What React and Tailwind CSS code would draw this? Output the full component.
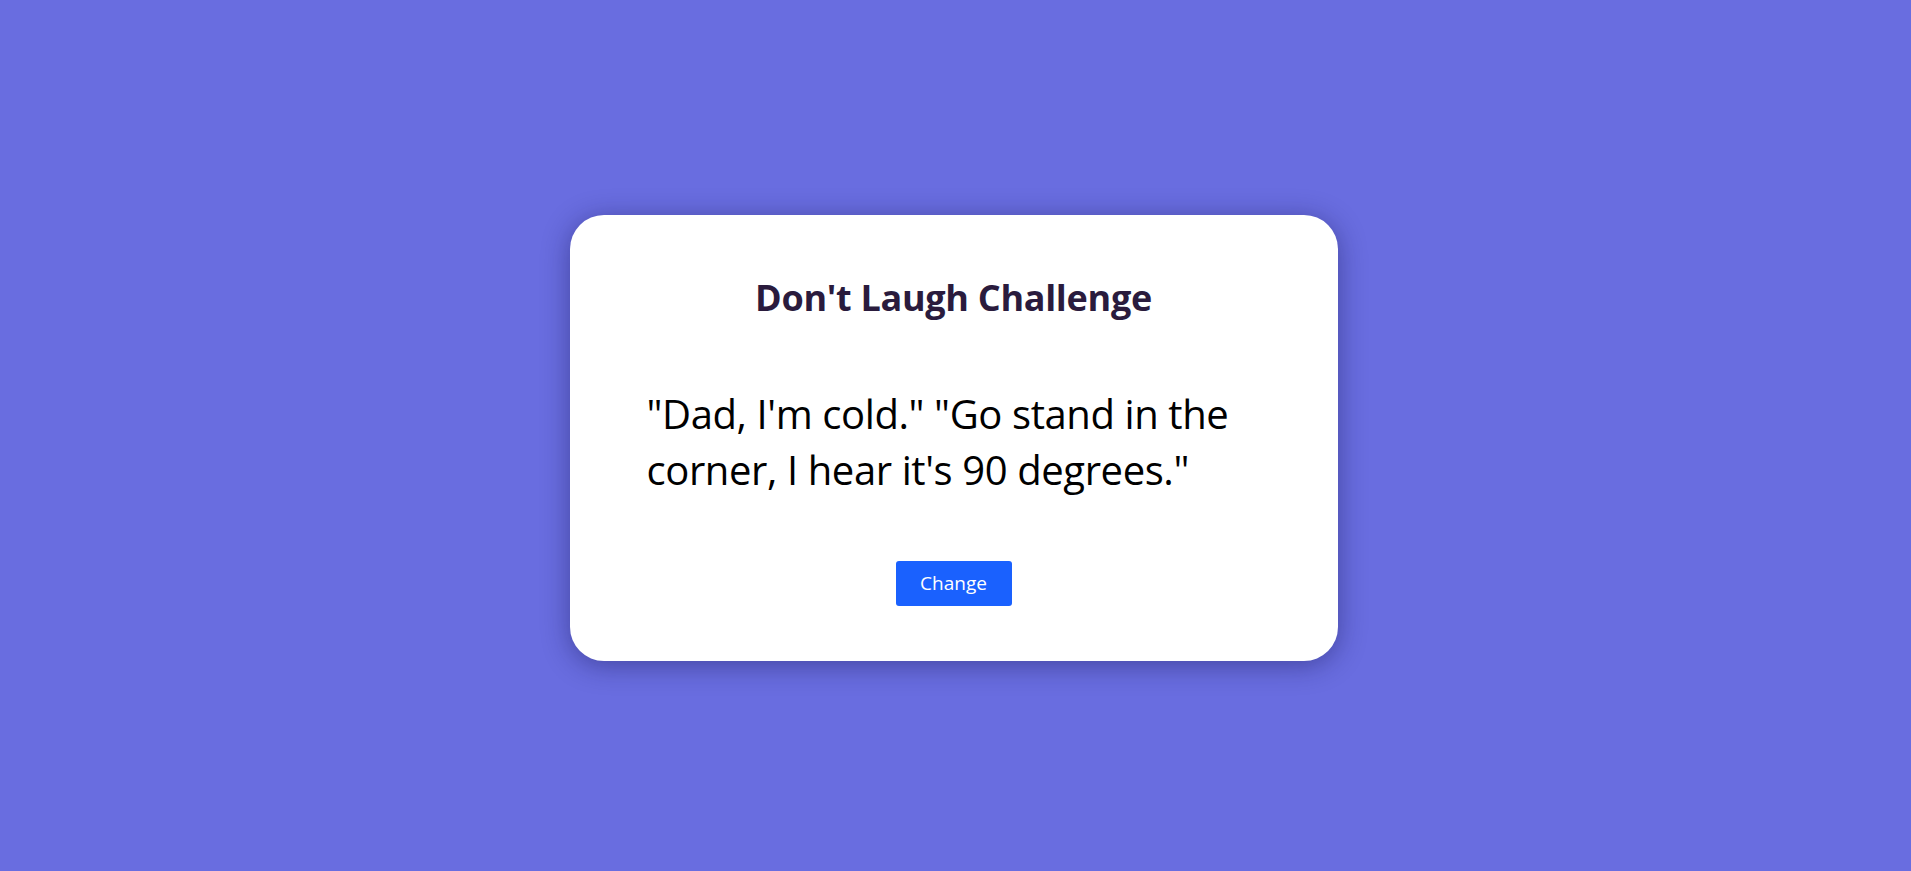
import React, { useState } from "react";

const jokes = [
  "\"Dad, I'm cold.\" \"Go stand in the corner, I hear it's 90 degrees.\"",
  "I'm reading a book about anti-gravity. It's impossible to put down.",
  "Why don't eggs tell jokes? They'd crack each other up.",
];

const App = () => {
  const [index, setIndex] = useState(0);

  return (
    <div
      className="min-h-screen w-full bg-[#696de0] flex items-center justify-center"
      style={{ fontFamily: '"Open Sans", "Noto Sans", sans-serif' }}
    >
      {/* Card */}
      <div className="w-[768px] h-[446px] bg-white rounded-[34px] shadow-[0_4px_28px_rgba(20,20,80,0.45)] flex flex-col items-center pt-[61px] translate-x-[-2px] translate-y-[2px]">
        <h1 className="text-[36px] leading-[44px] font-bold text-[#2a1b3d] tracking-[-0.3px]">
          Don't Laugh Challenge
        </h1>

        <p className="self-stretch px-[77px] mt-[66px] h-[112px] text-[40px] leading-[56px] text-black tracking-[-0.4px]">
          {jokes[index]}
        </p>

        <button
          onClick={() => setIndex((i) => (i + 1) % jokes.length)}
          className="mt-[63px] w-[116px] h-[45px] bg-[#1a61fe] text-white text-[19px] rounded-[3px] hover:bg-[#1552d8] transition"
        >
          Change
        </button>
      </div>
    </div>
  );
};

export default App;
